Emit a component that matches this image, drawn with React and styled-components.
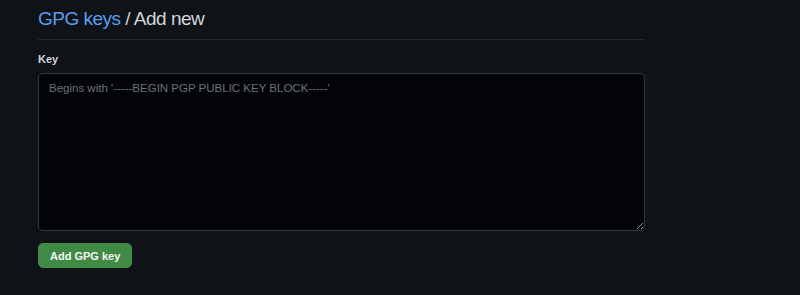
import React from "react";
import styled, { createGlobalStyle } from "styled-components";

const GlobalStyle = createGlobalStyle`
  html, body {
    margin: 0;
    padding: 0;
    background: #0f1217;
  }
  body {
    font-family: "Liberation Sans", Arial, sans-serif;
    color: #c9d1d9;
  }
`;

const Page = styled.div`
  width: 800px;
  height: 295px;
  padding: 0 155px 0 38px;
  box-sizing: border-box;
`;

const Subhead = styled.div`
  display: flex;
  align-items: center;
  height: 38px;
  border-bottom: 1px solid #262a31;
  padding-bottom: 1px;
`;

const Heading = styled.h2`
  margin: 0;
  font-size: 19px;
  font-weight: 400;
  letter-spacing: -0.5px;
  color: #d0d6de;
`;

const Crumb = styled.a`
  color: #5a9df0;
  text-decoration: none;
`;

const Form = styled.form`
  padding-top: 13px;
`;

const Label = styled.label`
  display: block;
  font-size: 11px;
  font-weight: 700;
  color: #d0d6de;
  margin-bottom: 8px;
`;

const KeyArea = styled.textarea`
  display: block;
  width: 100%;
  height: 158px;
  box-sizing: border-box;
  margin: 0;
  padding: 8px 10px;
  background: #030408;
  border: 1px solid #33383f;
  border-radius: 5px;
  color: #c9d1d9;
  font-family: "Liberation Sans", Arial, sans-serif;
  font-size: 11.5px;
  resize: vertical;
  outline: none;

  &::placeholder {
    color: #6b7178;
  }
`;

const SubmitButton = styled.button`
  margin-top: 12px;
  height: 25px;
  padding: 0 11px;
  background: #408a46;
  border: 1px solid #428c48;
  border-radius: 5px;
  color: #f4f6f4;
  font-family: "Liberation Sans", Arial, sans-serif;
  font-size: 11px;
  font-weight: 700;
  cursor: pointer;
`;

export default function App() {
  return (
    <>
      <GlobalStyle />
      <Page>
        <Subhead>
          <Heading>
            <Crumb href="#">GPG keys</Crumb> / Add new
          </Heading>
        </Subhead>
        <Form onSubmit={(e) => e.preventDefault()}>
          <Label htmlFor="gpg_key">Key</Label>
          <KeyArea
            id="gpg_key"
            placeholder="Begins with '-----BEGIN PGP PUBLIC KEY BLOCK-----'"
          />
          <SubmitButton type="submit">Add GPG key</SubmitButton>
        </Form>
      </Page>
    </>
  );
}
